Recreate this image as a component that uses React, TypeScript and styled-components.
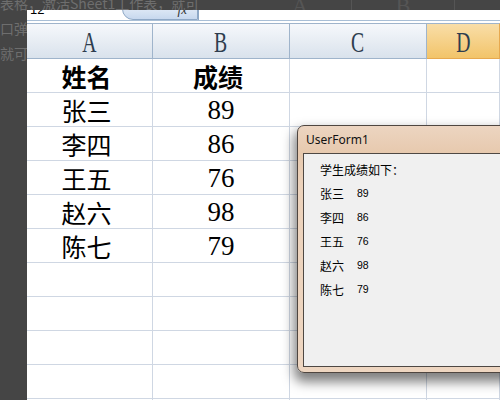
import React from "react";
import styled, { createGlobalStyle } from "styled-components";

const Global = createGlobalStyle`
  html, body { margin: 0; padding: 0; background: #454545; }
  #root { width: 500px; height: 400px; }
`;

const Desktop = styled.div`
  position: relative;
  width: 500px;
  height: 400px;
  overflow: hidden;
  background: #454545;
`;

const DocText = styled.div`
  margin-top: -9px;
  font-family: "Noto Sans CJK SC", "Liberation Sans", sans-serif;
  font-size: 14px;
  line-height: 24px;
  color: #6e6e6e;
`;

const DocLine = styled.div`
  display: flex;
  height: 25px;
  white-space: nowrap;
`;

const DocSpan = styled.span<{ $w?: number }>`
  flex: none;
  width: ${(p) => (p.$w ? `${p.$w}px` : "auto")};
  overflow: hidden;
`;

const BackHead = styled.span`
  flex: none;
  width: 102px;
  border-right: 1px solid #555;
  text-align: center;
  font-family: "Liberation Serif", serif;
  font-size: 22px;
  color: #555;
  line-height: 30px;
`;

const ExcelWindow = styled.div`
  position: absolute;
  left: 27px;
  top: 10px;
  right: 0;
  bottom: 0;
  background: #fff;
  display: flex;
  flex-direction: column;
  overflow: hidden;
`;

const FormulaBar = styled.div`
  flex: none;
  display: flex;
  height: 10px;
  border-bottom: 1px solid #a9bfd6;
  margin-bottom: 2px;
  overflow: hidden;
`;

const NameBox = styled.div`
  width: 91px;
  height: 17px;
  display: flex;
  align-items: flex-end;
  justify-content: space-between;
  padding: 0 6px 0 3px;
  font-family: "Liberation Sans", sans-serif;
  font-size: 13px;
  line-height: 14px;
  color: #000;
  box-sizing: border-box;
  margin-top: -10px;
`;

const Arrow = styled.span`
  font-size: 7px;
  line-height: 8px;
  margin-bottom: 5px;
`;

const FxButton = styled.div`
  width: 76px;
  height: 22px;
  margin-left: 4px;
  margin-top: -12px;
  border: 1px solid #8ea8c6;
  border-radius: 11px 0 0 11px;
  background: linear-gradient(to bottom, #f4f8fd, #c7d8ee);
  display: flex;
  align-items: flex-end;
  justify-content: flex-end;
  padding: 0 10px 2px 0;
  box-sizing: border-box;
  font-family: "Liberation Serif", serif;
  font-style: italic;
  font-size: 13px;
  line-height: 14px;
  color: #333;
`;

const FormulaInput = styled.div`
  flex: 1;
  border-left: 1px solid #8ea8c6;
`;

const Grid = styled.div`
  flex: none;
  display: grid;
  grid-template-columns: 126px 137px 137px 1fr;
`;

const HeadCell = styled.div<{ $active?: boolean }>`
  height: 36px;
  box-sizing: border-box;
  border-top: 1px solid #9fb4cb;
  border-bottom: 1px solid ${(p) => (p.$active ? "#e7a94f" : "#9fb4cb")};
  border-right: 1px solid ${(p) => (p.$active ? "#e7a94f" : "#9fb4cb")};
  background: ${(p) =>
    p.$active
      ? "linear-gradient(to bottom, #f9dea8, #f2c46a)"
      : "linear-gradient(to bottom, #f6f8fb, #d9e2ec)"};
  display: flex;
  align-items: center;
  justify-content: center;
`;

const HeadLetter = styled.span`
  display: inline-block;
  font-family: "Liberation Serif", serif;
  font-size: 29px;
  line-height: 30px;
  color: #2e3d4e;
  transform: scaleX(0.68);
  margin-top: 2px;
`;

const Cell = styled.div<{ $num?: boolean; $bold?: boolean }>`
  height: 34px;
  box-sizing: border-box;
  border-right: 1px solid #cfd7e3;
  border-bottom: 1px solid #cfd7e3;
  display: flex;
  align-items: center;
  justify-content: center;
  font-family: ${(p) =>
    p.$num
      ? `"Liberation Serif", serif`
      : `"Noto Sans CJK SC", "Liberation Serif", sans-serif`};
  font-size: ${(p) => (p.$num ? "27px" : "25px")};
  font-weight: ${(p) => (p.$bold ? 700 : 400)};
  color: #000;
  padding-right: ${(p) => (p.$num ? "0" : "6px")};
  line-height: 34px;
`;

const Dialog = styled.div`
  position: absolute;
  left: 297px;
  top: 125px;
  width: 230px;
  height: 248px;
  box-sizing: border-box;
  border: 1px solid #4f4640;
  border-radius: 7px 7px 0 7px;
  border-bottom-right-radius: 0;
  border-bottom-left-radius: 7px;
  background: linear-gradient(to bottom, #ecd5c1 0px, #e7c9ae 27px, #ecd2bb 60px, #eed6c1);
  box-shadow: -1px 7px 12px 2px rgba(0, 0, 0, 0.5);
  display: flex;
  flex-direction: column;
`;

const TitleBar = styled.div`
  height: 27px;
  display: flex;
  align-items: center;
  padding-left: 8px;
  font-family: "Noto Sans", "Liberation Sans", sans-serif;
  font-size: 12px;
  color: #111;
`;

const Client = styled.div`
  flex: 1;
  margin: 0 0 5px 5px;
  border: 1px solid #4e4843;
  border-right: none;
  background: #f0f0f0;
  padding: 3px 0 0 16px;
  font-family: "Noto Sans CJK SC", "Liberation Sans", sans-serif;
  font-size: 12px;
  color: #000;
`;

const FormLine = styled.div`
  height: 24px;
  display: flex;
  align-items: center;
`;

const FormName = styled.span`
  width: 37px;
`;

const FormScore = styled.span`
  font-family: "Liberation Sans", sans-serif;
  font-size: 10.5px;
`;

const students = [
  { name: "张三", score: 89 },
  { name: "李四", score: 86 },
  { name: "王五", score: 76 },
  { name: "赵六", score: 98 },
  { name: "陈七", score: 79 },
];

export default function App() {
  const emptyRows = Array.from({ length: 6 });
  return (
    <>
      <Global />
      <Desktop>
        <DocText>
          <DocLine>
            <DocSpan $w={249}>表格，激活Sheet1工作表，就可</DocSpan>
            <BackHead>A</BackHead>
            <BackHead>B</BackHead>
          </DocLine>
          <DocLine>
            <DocSpan>口弹出窗体</DocSpan>
          </DocLine>
          <DocLine>
            <DocSpan>就可以了</DocSpan>
          </DocLine>
        </DocText>
        <ExcelWindow>
          <FormulaBar>
            <NameBox>
              <span>12</span>
              <Arrow>▼</Arrow>
            </NameBox>
            <FxButton>fx</FxButton>
            <FormulaInput />
          </FormulaBar>
          <Grid>
            <HeadCell><HeadLetter>A</HeadLetter></HeadCell>
            <HeadCell><HeadLetter>B</HeadLetter></HeadCell>
            <HeadCell><HeadLetter>C</HeadLetter></HeadCell>
            <HeadCell $active><HeadLetter>D</HeadLetter></HeadCell>

            <Cell $bold>姓名</Cell>
            <Cell $bold>成绩</Cell>
            <Cell />
            <Cell />
            {students.map((s) => (
              <React.Fragment key={s.name}>
                <Cell>{s.name}</Cell>
                <Cell $num>{s.score}</Cell>
                <Cell />
                <Cell />
              </React.Fragment>
            ))}
            {emptyRows.map((_, i) => (
              <React.Fragment key={i}>
                <Cell />
                <Cell />
                <Cell />
                <Cell />
              </React.Fragment>
            ))}
          </Grid>
        </ExcelWindow>
        <Dialog>
          <TitleBar>UserForm1</TitleBar>
          <Client>
            <FormLine>学生成绩如下：</FormLine>
            {students.map((s) => (
              <FormLine key={s.name}>
                <FormName>{s.name}</FormName>
                <FormScore>{s.score}</FormScore>
              </FormLine>
            ))}
          </Client>
        </Dialog>
      </Desktop>
    </>
  );
}
